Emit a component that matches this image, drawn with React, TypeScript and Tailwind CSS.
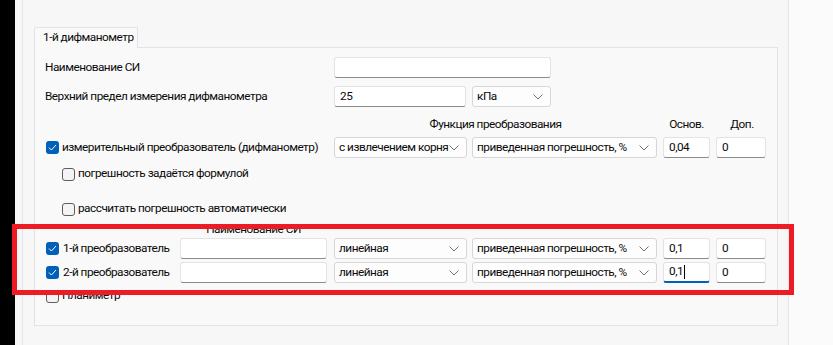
import React from 'react'

const font = { fontFamily: 'Roboto, "Noto Sans", sans-serif', letterSpacing: '-0.5px' }

function Chevron() {
  return (
    <svg width="10" height="6" viewBox="0 0 10 6" className="shrink-0">
      <polyline points="0.5,0.5 5,5 9.5,0.5" fill="none" stroke="#707070" strokeWidth="1" />
    </svg>
  )
}

function Check({ on }: { on: boolean }) {
  if (on) {
    return (
      <div className="w-[13px] h-[13px] rounded-[3px] bg-[#005fb8] flex items-center justify-center shrink-0">
        <svg width="9" height="7" viewBox="0 0 9 7">
          <polyline points="1,3.6 3.4,6 8,1" fill="none" stroke="#ffffff" strokeWidth="1" />
        </svg>
      </div>
    )
  }
  return <div className="w-[13px] h-[13px] rounded-[3px] border border-[#5c5c5c] bg-[#f4f4f4] shrink-0" />
}

function TextBox({ w, value, focused }: { w: string; value?: string; focused?: boolean }) {
  return (
    <div
      className={`${w} h-[21px] shrink-0 bg-white rounded-[3px] border border-[#e3e3e3] flex items-center pl-[5px] ${
        focused ? 'border-b-2 border-b-[#005fb8]' : 'border-b-[#8a8a8a]'
      }`}
    >
      {value}
      {focused && <span className="inline-block w-px h-[14px] bg-black ml-px" />}
    </div>
  )
}

function Select({ w, value }: { w: string; value: string }) {
  return (
    <div className={`${w} h-[21px] shrink-0 bg-[#fdfdfd] rounded-[3px] border border-[#d6d6d6] flex items-center justify-between pl-[4px] pr-[7px]`}>
      <span className="whitespace-nowrap">{value}</span>
      <Chevron />
    </div>
  )
}

export default function App() {
  return (
    <div className="relative w-[833px] h-[345px] flex bg-[#f7f7f7] overflow-hidden text-[11.8px] text-[#0a0a0a] whitespace-nowrap" style={font}>
      <div className="w-[15px] bg-black shrink-0" />
      <div className="w-[7px] shrink-0" />
      <div className="w-[767px] shrink-0 border-l border-r border-[#e6e6e6] pl-[11px] pt-[27px]">
        {/* вкладка */}
        <div className="w-[104px] h-[21px] border border-b-0 border-[#e3e3e3] rounded-t-[2px] bg-[#f9f9f9] flex items-center pl-[8px] relative z-10">
          1-й дифманометр
        </div>
        <div className="w-[744px] h-[279px] -mt-px border border-[#e3e3e3] bg-[#f9f9f9]">
          {/* Наименование СИ */}
          <div className="flex items-center mt-[9px] h-[21px]">
            <div className="w-[299px] pl-[10px]">Наименование СИ</div>
            <TextBox w="w-[217px]" />
          </div>
          {/* Верхний предел */}
          <div className="flex items-center mt-[8px] h-[21px]">
            <div className="w-[299px] pl-[10px]">Верхний предел измерения дифманометра</div>
            <TextBox w="w-[132px]" value="25" />
            <div className="w-[6px]" />
            <Select w="w-[79px]" value="кПа" />
          </div>
          {/* заголовки */}
          <div className="flex items-center mt-[6px] h-[24px]">
            <div className="w-[299px]" />
            <div className="w-[323px] text-center">Функция преобразования</div>
            <div className="w-[6px]" />
            <div className="w-[47px] text-center">Основ.</div>
            <div className="w-[7px]" />
            <div className="w-[50px] text-center">Доп.</div>
          </div>
          {/* измерительный преобразователь */}
          <div className="flex items-center h-[21px]">
            <div className="w-[299px] pl-[11px] flex items-center gap-[3px]">
              <Check on />
              <span>измерительный преобразователь (дифманометр)</span>
            </div>
            <Select w="w-[133px]" value="с извлечением корня" />
            <div className="w-[5px]" />
            <Select w="w-[185px]" value="приведенная погрешность, %" />
            <div className="w-[6px]" />
            <TextBox w="w-[47px]" value="0,04" />
            <div className="w-[6px]" />
            <TextBox w="w-[50px]" value="0" />
          </div>
          <div className="flex items-center mt-[6px] h-[20px] pl-[27px] gap-[3px]">
            <Check on={false} />
            <span>погрешность задаётся формулой</span>
          </div>
          <div className="flex items-center mt-[15px] h-[20px] pl-[27px] gap-[3px]">
            <Check on={false} />
            <span>рассчитать погрешность автоматически</span>
          </div>
          {/* преобразователи */}
          <div className="flex items-center mt-[3px] h-[16px]">
            <div className="w-[145px]" />
            <div className="w-[147px] text-center">Наименование СИ</div>
          </div>
          {['1-й преобразователь', '2-й преобразователь'].map((name, i) => (
            <div key={i} className={`flex items-center h-[21px] ${i === 1 ? 'mt-[3px]' : ''}`}>
              <div className="w-[145px] pl-[11px] flex items-center gap-[4px]">
                <Check on />
                <span>{name}</span>
              </div>
              <TextBox w="w-[147px]" />
              <div className="w-[7px]" />
              <Select w="w-[133px]" value="линейная" />
              <div className="w-[5px]" />
              <Select w="w-[185px]" value="приведенная погрешность, %" />
              <div className="w-[6px]" />
              <TextBox w="w-[47px]" value="0,1" focused={i === 1} />
              <div className="w-[6px]" />
              <TextBox w="w-[50px]" value="0" />
            </div>
          ))}
          <div className="flex items-center mt-[5px] h-[16px] pl-[11px] gap-[3px]">
            <Check on={false} />
            <span>Планиметр</span>
          </div>
        </div>
      </div>
      <div className="flex-1 bg-[#fbfbfb]" />

      {/* выделение */}
      <div className="absolute left-[12px] top-[224px] w-[782px] h-[71px] border-[5px] border-[#ed1c24] pointer-events-none" />
    </div>
  )
}
